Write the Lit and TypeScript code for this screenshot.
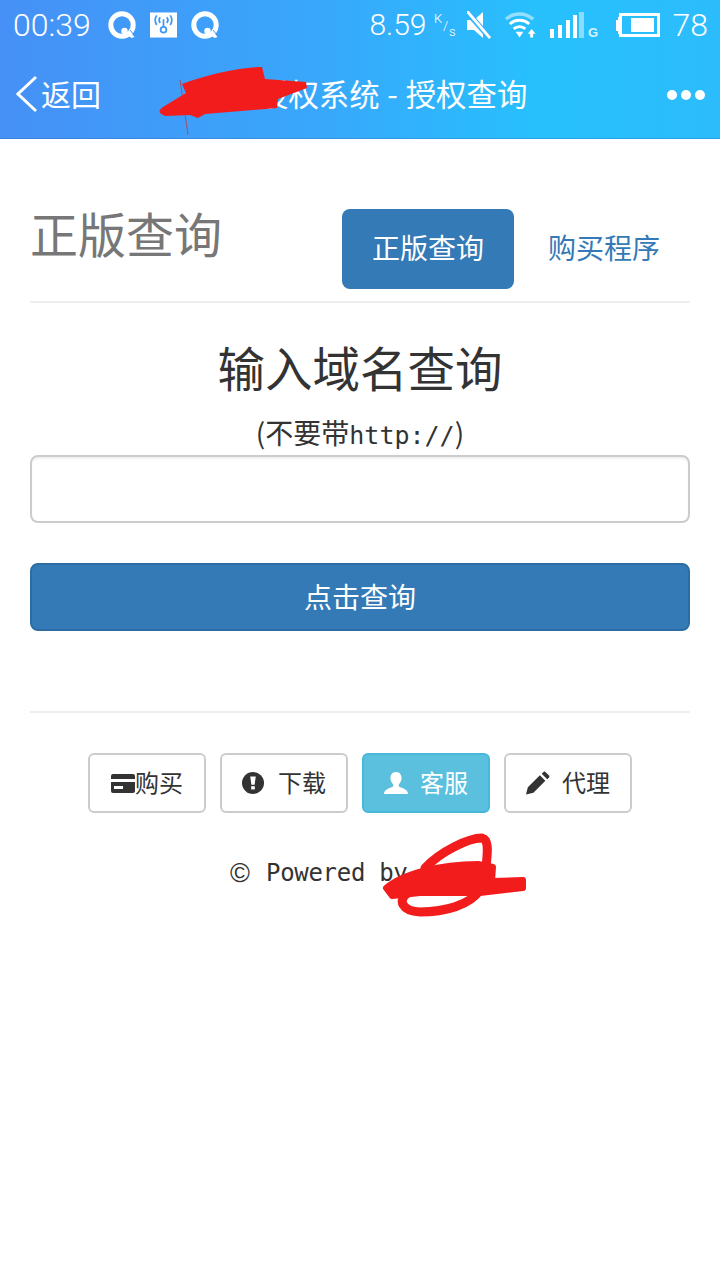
import { LitElement, html, css } from "lit";
import { customElement } from "lit/decorators.js";

const qIcon = html`<svg width="28" height="28" viewBox="0 0 28 28"><circle cx="14" cy="14" r="11.200" fill="none" stroke="#fff" stroke-width="5"/><circle cx="16.500" cy="20" r="3.200" fill="#fff"/><path d="M21 19 L26.500 26 L23.500 27 L19.500 24 Z" fill="#fff"/><path d="M22 19 L26.500 24.500" stroke="#3f98f7" stroke-width="1"/></svg>`;

@customElement("app-root")
export class AppRoot extends LitElement {
  static styles = css`
    :host { display: block; width: 720px; height: 1280px; background: #fff; position: relative; overflow: hidden;
      font-family: "Noto Sans CJK SC", "Liberation Sans", sans-serif; color: #333; }
    .top { height: 139px; background: linear-gradient(90deg, #4690f6 0%, #38a8fb 45%, #27c0fd 75%, #2cbcfc 100%); color: #fff; box-shadow: inset 0 -1px rgba(40, 80, 160, .25); }
    .status { height: 50px; display: flex; align-items: center; padding: 0 12px 0 13px; font-family: Roboto, sans-serif; font-weight: 300; }
    .time { font-size: 32px; margin-right: 17px; line-height: 50px; }
    .left { display: flex; align-items: center; gap: 14px; }
    .spacer { flex: 1; }
    .right { display: flex; align-items: center; }
    .speed { font-size: 30px; line-height: 50px; }
    .kps { margin: 0 11px 0 7px; }
    .kps text { font-family: Roboto, sans-serif; font-size: 13px; fill: #fff; }
    .batt-num { font-size: 32px; line-height: 50px; margin-left: 13px; }
    svg { display: block; flex: none; }
    .ml13 { margin-left: 13px; }
    .ml14 { margin-left: 14px; }
    .ml16 { margin-left: 16px; }
    .g { font-family: "Liberation Sans", sans-serif; font-size: 13px; font-weight: 700; fill: #fff; opacity: .8; }
    .nav { height: 89px; display: flex; align-items: center; padding: 0 15px 4px 16px; box-sizing: border-box; font-size: 30px; }
    .back { display: flex; align-items: center; gap: 3px; }
    .chev { margin-top: 3px; }
    .title { margin-left: 157px; white-space: nowrap; font-size: 30.4px; word-spacing: 1px; }
    .dots { margin-left: auto; margin-top: 4px; display: flex; gap: 4px; }
    .dots i { width: 10px; height: 10px; border-radius: 50%; background: #fff; display: block; }
    .main { padding: 0 30px; }
    .head { height: 164px; box-sizing: border-box; display: flex; border-bottom: 2px solid #eee; padding-top: 70px; }
    .head h3 { margin: -3px 0 0; font-size: 48px; font-weight: 400; color: #777; line-height: 52px; flex: none; width: 312px; }
    .tab { height: 80px; box-sizing: border-box; border-radius: 8px; font-size: 28px; display: flex; align-items: center; justify-content: center; flex: none; padding-bottom: 4px; }
    .tab.on { width: 172px; background: #337ab7; color: #fff; }
    .tab.off { width: 159px; margin-left: 17px; color: #337ab7; justify-content: flex-start; padding-left: 17px; }
    h2 { margin: 37px 0 0; text-align: center; font-size: 47.5px; font-weight: 400; line-height: 54px; color: #333; }
    .hint { margin-top: 18px; text-align: center; font-size: 28px; line-height: 40px; height: 43px; white-space: nowrap; color: #333; }
    .mono { font-family: "DejaVu Sans Mono", monospace; font-size: 25px; }
    .input { height: 68px; box-sizing: border-box; border: 2px solid #ccc; border-radius: 8px; background: #fff; box-shadow: inset 0 2px 2px rgba(0, 0, 0, .06); }
    .submit { margin-top: 40px; height: 68px; box-sizing: border-box; background: #337ab7; border: 2px solid #2e6da4; border-radius: 8px; color: #fff; font-size: 28px; display: flex; align-items: center; justify-content: center; padding-bottom: 3px; }
    .rule { margin-top: 80px; height: 2px; background: #eee; }
    .btns { margin-top: 40px; display: flex; justify-content: center; gap: 14px; }
    .btn { height: 60px; box-sizing: border-box; border: 2px solid #ccc; border-radius: 6px; font-size: 24px; display: flex; align-items: center; justify-content: center; color: #333; background: #fff; flex: none; }
    .btn span { margin-bottom: 3px; }
    .btn.w1 { width: 118px; }
    .btn.w2 { width: 128px; gap: 12px; }
    .btn.wide-gap { gap: 14px; }
    .btn.info { background: #5bc0de; border-color: #46b8da; color: #fff; }
    .powered { margin-top: 42px; padding-left: 200px; font-family: "DejaVu Sans Mono", monospace; font-size: 24px; letter-spacing: -0.3px; line-height: 36px; color: #333; white-space: pre; display: flex; align-items: center; }
    .copy { font-family: "Liberation Sans", sans-serif; font-size: 27px; width: 36px; flex: none; }
    .scribble { position: absolute; left: 0; top: 0; pointer-events: none; }
  `;

  render() {
    return html`
      <div class="top">
        <div class="status">
          <span class="time">00:39</span>
          <div class="left">
            ${qIcon}
            <svg width="27" height="26" viewBox="0 0 28 26"><rect width="28" height="26" fill="#fff"/><g fill="none" stroke="#3f98f7" stroke-width="1.800"><circle cx="14" cy="18" r="3"/><path d="M14 15V7M10.500 11a5 5 0 0 1 0-6M17.500 11a5 5 0 0 0 0-6M7 13a9 9 0 0 1 0-10M21 13a9 9 0 0 0 0-10"/></g></svg>
            ${qIcon}
          </div>
          <div class="spacer"></div>
          <div class="right">
            <span class="speed">8.59</span>
            <svg class="kps" width="22" height="28" viewBox="0 0 22 28"><text x="0" y="12">K</text><text x="9" y="19" font-size="15">/</text><text x="15" y="25">s</text></svg>
            <svg width="24" height="28" viewBox="0 0 24 28" fill="#fff"><path d="M0 9h7l9-8v26l-9-8H0Z"/><path d="M0 1 L23 27" stroke="#33b2fb" stroke-width="5.500"/><path d="M0 0 L23 27" stroke="#fff" stroke-width="2.800"/></svg>
            <svg class="ml14" width="32" height="28" viewBox="0 0 33 28" fill="none" stroke="#fff"><path d="M1 8a21 21 0 0 1 28 0" stroke-width="3.500" opacity=".5"/><path d="M5 13a15 15 0 0 1 20 0M9 18a9 9 0 0 1 12 0" stroke-width="3"/><path d="M11 21h8l-4 6Z" fill="#fff" stroke="none"/><path d="M26 27v-4h-2.500l4-5 4 5H29v4Z" fill="#fff" stroke="none"/></svg>
            <svg class="ml13" width="50" height="27" viewBox="0 0 50 27" fill="#fff"><rect x="0" y="17" width="4" height="9"/><rect x="8" y="13" width="4" height="13"/><rect x="16" y="8" width="4" height="18"/><rect x="23" y="3" width="4" height="23"/><rect x="29" y="0" width="5" height="26" opacity=".45"/><text class="g" x="38" y="25">G</text></svg>
            <svg class="ml16" width="44" height="24" viewBox="0 0 44 24" fill="#fff"><path d="M2 7V4h2v17H2v-3H0V7Z"/><rect x="4.500" y="1.500" width="38" height="21" fill="none" stroke="#fff" stroke-width="3"/><rect x="15" y="5" width="23" height="14"/></svg>
            <span class="batt-num">78</span>
          </div>
        </div>
        <div class="nav">
          <div class="back">
            <svg class="chev" width="22" height="38" viewBox="0 0 22 38" fill="none" stroke="#fff" stroke-width="3"><path d="M20 2 L2 19 L20 36"/></svg>
            <span>返回</span>
          </div>
          <span class="title">授权系统 - 授权查询</span>
          <div class="dots"><i></i><i></i><i></i></div>
        </div>
      </div>
      <div class="main">
        <div class="head">
          <h3>正版查询</h3>
          <div class="tab on">正版查询</div>
          <div class="tab off">购买程序</div>
        </div>
        <h2>输入域名查询</h2>
        <div class="hint">(不要带<span class="mono">http://</span>)</div>
        <div class="input"></div>
        <div class="submit">点击查询</div>
        <div class="rule"></div>
        <div class="btns">
          <div class="btn w1">
            <svg width="24" height="19" viewBox="0 0 24 19" fill="#333"><path d="M2 0h20a2 2 0 0 1 2 2v3H0V2a2 2 0 0 1 2-2ZM0 8h24v9a2 2 0 0 1-2 2H2a2 2 0 0 1-2-2Zm3 4v3h9v-3Z"/></svg>
            <span>购买</span>
          </div>
          <div class="btn w2 wide-gap">
            <svg width="22" height="22" viewBox="0 0 24 24"><circle cx="12" cy="12" r="12" fill="#333"/><path d="M9 5h6l-1.200 9h-3.600Z" fill="#fff"/><rect x="10" y="15.500" width="4" height="3.500" fill="#fff"/></svg>
            <span>下载</span>
          </div>
          <div class="btn w2 info">
            <svg width="24" height="24" viewBox="0 0 26 24" fill="#fff"><path d="M13 0c4 0 6 3 6 6.500 0 3-1.500 5.500-3 7v2c2 2 10 2.500 10 8.500H0c0-6 8-6.500 10-8.500v-2c-1.500-1.500-3-4-3-7C7 3 9 0 13 0Z"/></svg>
            <span>客服</span>
          </div>
          <div class="btn w2">
            <svg width="24" height="24" viewBox="0 0 26 25" fill="#333"><path d="M0 25l2-8L15 4l6 6L8 23ZM17 2.500 19 .5c.6-.6 1.500-.5 2 0l4 4c.5.500.6 1.400 0 2l-2 2Z"/></svg>
            <span>代理</span>
          </div>
        </div>
        <div class="powered"><span class="copy">©</span><span>Powered by</span></div>
      </div>
      <svg class="scribble" width="720" height="1280" viewBox="0 0 720 1280" fill="none">
        <path d="M180 80 L188 135" stroke="#a0506e" stroke-width="1"/>
        <path d="M182 84 C205 75 240 67 262 67 L265 79 L306 82 L307 88 L278 99 L277 108 L205 114 L198 118 L190 115 L165 116 Q155 112 163 107 L186 93 Z" fill="#f21c1c"/>
        <g stroke="#f21c1c" stroke-linecap="round" stroke-linejoin="round">
          <path d="M386 888 C402 874 440 864 478 864 L493 867 L492 881 L523 880 L523 888 L480 893 L420 893 L392 896 Z" fill="#f21c1c" stroke-width="6"/>
          <path d="M425 868 C440 852 468 838 482 838 C490 840 487 855 486 868" stroke-width="9"/>
          <path d="M480 890 C470 905 445 912 420 912 C402 911 397 900 408 893" stroke-width="9"/>
        </g>
      </svg>
    `;
  }
}
